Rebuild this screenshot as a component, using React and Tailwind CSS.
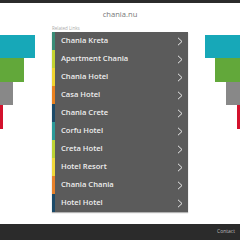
const links = [
  { label: 'Chania Kreta', stripe: 'bg-[#3a8c76]' },
  { label: 'Apartment Chania', stripe: 'bg-[#c3d331]' },
  { label: 'Chania Hotel', stripe: 'bg-[#f1d42f]' },
  { label: 'Casa Hotel', stripe: 'bg-[#e9811f]' },
  { label: 'Chania Crete', stripe: 'bg-[#1c4a68]' },
  { label: 'Corfu Hotel', stripe: 'bg-[#2b9a98]' },
  { label: 'Creta Hotel', stripe: 'bg-[#bcd334]' },
  { label: 'Hotel Resort', stripe: 'bg-[#f0d83a]' },
  { label: 'Chania Chania', stripe: 'bg-[#e8812a]' },
  { label: 'Hotel Hotel', stripe: 'bg-[#1c4a68]' },
];

const Chevron = () => (
  <svg width="6" height="9" viewBox="0 0 6 9" fill="none">
    <path d="M1 0.8 L5 4.5 L1 8.2" stroke="#e8e8e8" strokeWidth="1" />
  </svg>
);

const App = () => {
  return (
    <div
      className="w-[240px] h-[240px] bg-white flex flex-col overflow-hidden"
      style={{ fontFamily: '"Open Sans", "Liberation Sans", sans-serif' }}
    >
      <div className="h-[3px] bg-[#2b2b2b]" />

      {/* TITLE */}
      <div className="h-[22px] flex items-center justify-center pt-[2px] text-[7.6px] text-[#777]">
        chania.nu
      </div>

      <div className="flex">
        {/* LEFT DECO */}
        <div className="w-[52px] pt-[10px] flex flex-col items-start">
          <div className="w-[35px] h-[23px] bg-[#17a8b8]" />
          <div className="w-[24px] h-[24px] bg-[#62a83a]" />
          <div className="w-[13px] h-[23px] bg-[#888888]" />
          <div className="w-[3px] h-[24px] bg-[#d3122d]" />
        </div>

        {/* LINKS */}
        <div className="w-[136px] flex flex-col">
          <div className="h-[7px] text-[4.5px] leading-[7px] text-[#aaa]">Related Links</div>
          <div className="bg-[#5b5b5b] shadow-[0_1px_1px_rgba(0,0,0,0.3)]">
            {links.map((l) => (
              <div key={l.label} className="h-[18px] flex items-center">
                <div className={`w-[3px] h-full ${l.stripe}`} />
                <div className="flex-1 pl-[6px] text-[7.6px] font-semibold text-[#eee]">{l.label}</div>
                <div className="pr-[5px] flex items-center"><Chevron /></div>
              </div>
            ))}
          </div>
        </div>

        {/* RIGHT DECO */}
        <div className="w-[52px] pt-[10px] flex flex-col items-end">
          <div className="w-[35px] h-[23px] bg-[#17a8b8]" />
          <div className="w-[25px] h-[24px] bg-[#62a83a]" />
          <div className="w-[14px] h-[23px] bg-[#888888]" />
          <div className="w-[3px] h-[24px] bg-[#d3122d]" />
        </div>
      </div>

      {/* FOOTER */}
      <div className="mt-auto h-[16px] bg-[#2b2b2b] flex items-center justify-end pr-[5px]">
        <span className="text-[5px] text-[#bbb]">Contact</span>
      </div>
    </div>
  );
};

export default App;
